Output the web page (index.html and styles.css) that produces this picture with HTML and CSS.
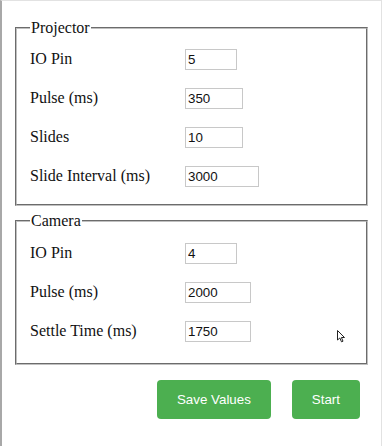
FILE: index.html
```html
<!DOCTYPE html>
<html>
<head>
    <title>Projector Control</title>
    <link rel="stylesheet" href="styles.css">
</head>
<body>
    <div class="page">
        <fieldset>
            <legend>Projector</legend>
            <div class="fields">
                <div class="row">
                    <label for="p-pin">IO Pin</label>
                    <input type="text" id="p-pin" class="w-sm" value="5">
                </div>
                <div class="row">
                    <label for="p-pulse">Pulse (ms)</label>
                    <input type="text" id="p-pulse" class="w-md" value="350">
                </div>
                <div class="row">
                    <label for="p-slides">Slides</label>
                    <input type="text" id="p-slides" class="w-md" value="10">
                </div>
                <div class="row">
                    <label for="p-interval">Slide Interval (ms)</label>
                    <input type="text" id="p-interval" class="w-lg" value="3000">
                </div>
            </div>
        </fieldset>

        <fieldset class="camera">
            <legend>Camera</legend>
            <div class="fields">
                <div class="row">
                    <label for="c-pin">IO Pin</label>
                    <input type="text" id="c-pin" class="w-sm" value="4">
                </div>
                <div class="row">
                    <label for="c-pulse">Pulse (ms)</label>
                    <input type="text" id="c-pulse" class="w-ml" value="2000">
                </div>
                <div class="row">
                    <label for="c-settle">Settle Time (ms)</label>
                    <input type="text" id="c-settle" class="w-ml" value="1750">
                </div>
            </div>
        </fieldset>

        <div class="actions">
            <button type="button" id="save">Save Values</button>
            <button type="button" id="start">Start</button>
        </div>

        <svg class="cursor" width="9" height="13" viewBox="0 0 9 13">
            <path d="M0.5 0.5 L0.5 10 L2.8 8 L4.5 11.8 L6 11.2 L4.4 7.5 L7.5 7.5 Z" fill="#fff" stroke="#222" stroke-width="1"/>
        </svg>
    </div>
</body>
</html>
```

FILE: styles.css
```css
body {
    margin: 0;
    font-family: "Liberation Serif", serif;
    font-size: 16px;
    color: #111;
}

.page {
    position: relative;
    width: 353px;
    height: 427px;
    padding: 18px 13px 0 13px;
    border-left: 2px solid #a8a8a8;
    border-top: 1px solid #e2e2e2;
    border-right: 1px solid #e2e2e2;
}

fieldset {
    margin: 0;
    padding: 0 12px 0 13px;
    border: 2px groove #c0c0c0;
}

legend {
    padding: 0 1px;
    line-height: 18px;
}

.camera {
    margin-top: 6px;
}

.fields {
    display: flex;
    flex-direction: column;
    gap: 17px;
    padding: 11px 0 17px;
}

.camera .fields {
    padding: 12px 0 21px;
}

.row {
    display: flex;
    align-items: center;
    height: 22px;
}

label {
    width: 155px;
}

input[type="text"] {
    font-family: "Liberation Sans", Arial, sans-serif;
    font-size: 13.33px;
    color: #111;
    height: 21px;
    box-sizing: border-box;
    padding: 1px 2px;
    border: 1px solid #c8c8c8;
    border-radius: 0;
}

.w-sm { width: 52px; }
.w-md { width: 58px; }
.w-ml { width: 66px; }
.w-lg { width: 74px; }

.actions {
    display: flex;
    justify-content: flex-end;
    gap: 21px;
    margin-top: 15px;
    padding-right: 8px;
}

button[type="button"] {
    font-family: "Liberation Sans", Arial, sans-serif;
    font-size: 13.33px;
    height: 39px;
    padding: 0 20px;
    background-color: #4CAF50;
    color: #fff;
    border: none;
    border-radius: 4px;
    cursor: pointer;
}

button[type="button"]:hover {
    background-color: #3e8e41;
}

.cursor {
    position: absolute;
    left: 335px;
    top: 329px;
}
```
